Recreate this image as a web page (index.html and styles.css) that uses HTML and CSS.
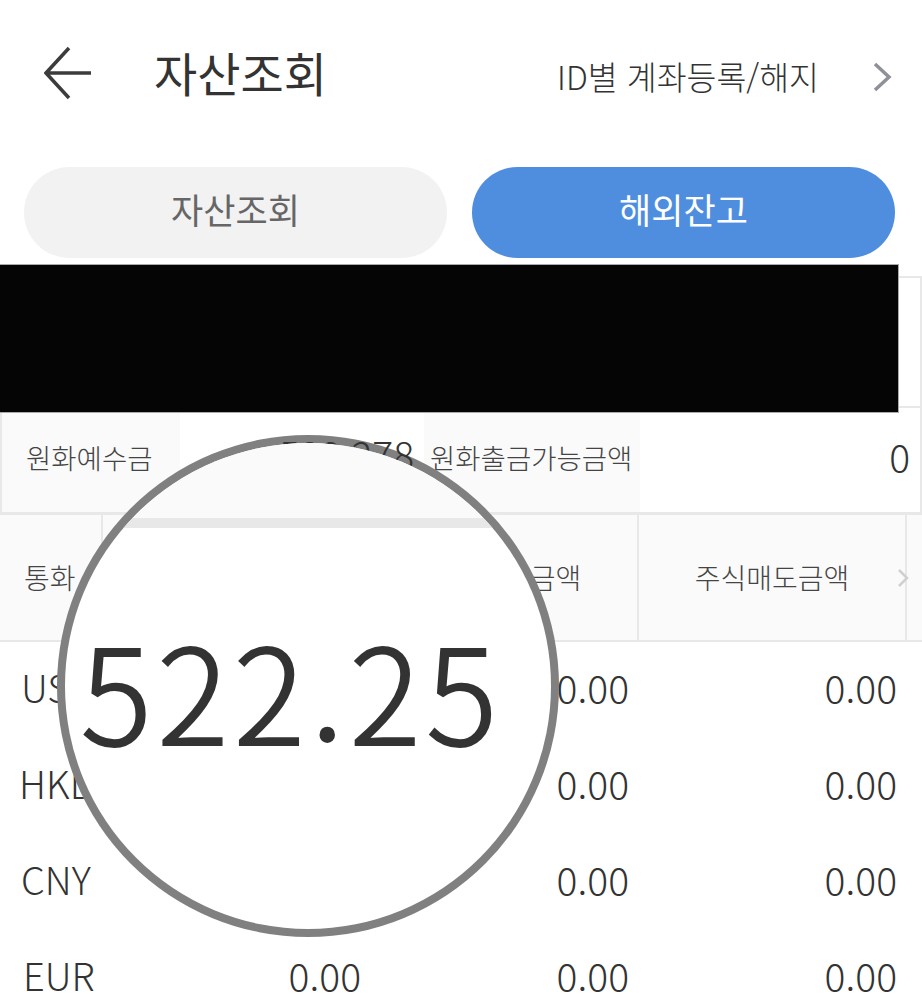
FILE: index.html
```html
<!DOCTYPE html>
<html lang="ko">
<head>
    <meta charset="UTF-8">
    <meta name="viewport" content="width=device-width, initial-scale=1.0">
    <title>자산조회</title>
    <link rel="stylesheet" href="styles.css">
</head>
<body>
    <div class="page">
        <header class="top-bar">
            <svg class="back-icon" width="50" height="56" viewBox="0 0 50 56">
                <path d="M25 3 L2 28 L25 53 M2 28 H47" fill="none" stroke="#3c3c3c" stroke-width="3.5"/>
            </svg>
            <h1 class="page-title">자산조회</h1>
            <span class="account-link">ID별 계좌등록/해지</span>
            <svg class="chevron-icon" width="20" height="32" viewBox="0 0 20 32">
                <path d="M3 3 L17 16 L3 29" fill="none" stroke="#8f9198" stroke-width="3.5"/>
            </svg>
        </header>

        <div class="tabs">
            <button class="tab">자산조회</button>
            <button class="tab tab-active">해외잔고</button>
        </div>

        <section class="summary">
            <div class="hidden-row"></div>
            <div class="summary-row">
                <div class="label-cell summary-label-a">원화예수금</div>
                <div class="value-cell summary-value-a">522,278</div>
                <div class="label-cell summary-label-b">원화출금가능금액</div>
                <div class="value-cell summary-value-b">0</div>
            </div>
            <div class="redaction"></div>
        </section>

        <section class="balance-table">
            <div class="table-row table-head">
                <div class="head-cell head-currency">통화</div>
                <div class="head-cell">외화예수금</div>
                <div class="head-cell">주식매수금액</div>
                <div class="head-cell">주식매도금액</div>
                <div class="head-more">
                    <svg width="12" height="20" viewBox="0 0 12 20">
                        <path d="M2 2 L10 10 L2 18" fill="none" stroke="#d0d0d0" stroke-width="2.5"/>
                    </svg>
                </div>
            </div>
            <div class="table-row">
                <div class="currency-cell">USD</div>
                <div class="amount-cell">522.25</div>
                <div class="amount-cell">0.00</div>
                <div class="amount-cell">0.00</div>
            </div>
            <div class="table-row">
                <div class="currency-cell currency-hkd">HKD</div>
                <div class="amount-cell">0.00</div>
                <div class="amount-cell">0.00</div>
                <div class="amount-cell">0.00</div>
            </div>
            <div class="table-row">
                <div class="currency-cell">CNY</div>
                <div class="amount-cell">0.00</div>
                <div class="amount-cell">0.00</div>
                <div class="amount-cell">0.00</div>
            </div>
            <div class="table-row">
                <div class="currency-cell currency-eur">EUR</div>
                <div class="amount-cell">0.00</div>
                <div class="amount-cell">0.00</div>
                <div class="amount-cell">0.00</div>
            </div>
        </section>

        <!-- magnifier over the table: ring sits under the summary value, lens above it -->
        <div class="magnifier-ring"></div>
        <div class="magnifier">
            <div class="magnifier-head"></div>
            <div class="magnifier-band"></div>
            <div class="magnifier-text">522.25</div>
        </div>
    </div>
</body>
</html>
```
FILE: styles.css
```css
* {
    box-sizing: border-box;
}

html, body {
    margin: 0;
    height: 100%;
    overflow: hidden;
    background: #fff;
}

.page {
    position: relative;
    width: 922px;
    height: 994px;
    overflow: hidden;
    color: #333;
    font-family: "Noto Sans CJK KR", "Noto Sans", sans-serif;
    font-weight: 300;
}

/* Top bar */
.top-bar {
    display: flex;
    align-items: center;
    height: 150px;
    padding: 0 30px 4px 44px;
}

.back-icon {
    flex: none;
    margin-right: 60px;
}

.page-title {
    margin: -4px 0 0;
    font-size: 47px;
    font-weight: 400;
}

.account-link {
    margin-left: auto;
    margin-right: 53px;
    padding-top: 4px;
    font-size: 32.5px;
    font-weight: 300;
}

.chevron-icon {
    flex: none;
    margin-top: 8px;
}

/* Tabs */
.tabs {
    display: flex;
    gap: 25px;
    padding: 17px 27px 0 24px;
}

.tab {
    flex: 1;
    height: 91px;
    padding-bottom: 9px;
    border: none;
    border-radius: 46px;
    background-color: #f2f2f2;
    color: #666;
    font-family: inherit;
    font-size: 35px;
}

.tab-active {
    background-color: #4f8edf;
    color: #fff;
}

/* Summary */
.summary {
    position: relative;
    margin-top: 18px;
    border-top: 2px solid #e8e8e8;
}

.hidden-row {
    height: 130px;
    border-right: 2px solid #e8e8e8;
    border-bottom: 2px solid #e8e8e8;
}

.summary-row {
    display: grid;
    grid-template-columns: 178px 244px 216px 1fr;
    height: 107px;
    border-left: 2px solid #e8e8e8;
    border-right: 2px solid #e8e8e8;
    border-bottom: 3px solid #e8e8e8;
}

.label-cell {
    display: flex;
    align-items: center;
    padding-bottom: 7px;
    background-color: #fafafa;
    color: #444;
    font-size: 27.5px;
    white-space: nowrap;
}

.summary-label-a {
    padding-left: 24px;
}

.summary-label-b {
    padding-left: 6px;
}

.value-cell {
    display: flex;
    align-items: center;
    justify-content: flex-end;
    padding-bottom: 9px;
    font-size: 39px;
}

.summary-value-a {
    position: relative;
    z-index: 2;
    padding-right: 10px;
    padding-bottom: 14px;
}

.summary-value-b {
    padding-right: 10px;
}

.redaction {
    position: absolute;
    left: 0;
    top: -14px;
    width: 899px;
    height: 149px;
    border: 1px solid #aaa;
    border-left: none;
    background-color: #050505;
}

/* Balance table */
.table-row {
    display: grid;
    grid-template-columns: 103px 268px 268px 268px 15px;
    height: 96px;
    align-items: center;
}

.table-head {
    align-items: stretch;
    height: 127px;
    border-bottom: 2px solid #e8e8e8;
    background-color: #fafafa;
}

.head-cell {
    display: flex;
    align-items: center;
    justify-content: center;
    padding-bottom: 2px;
    border-right: 2px solid #e8e8e8;
    color: #444;
    font-size: 28px;
}

.head-currency {
    justify-content: flex-start;
    padding-left: 24px;
}

.head-more {
    display: flex;
    align-items: center;
    margin-left: -10px;
}

.currency-cell {
    padding-left: 21px;
    padding-bottom: 7px;
    font-size: 38px;
}

.currency-hkd {
    padding-left: 19px;
}

.currency-eur {
    padding-left: 23px;
}

.amount-cell {
    padding-right: 10px;
    padding-bottom: 7px;
    text-align: right;
    font-size: 39px;
}

/* Magnifier */
.magnifier-ring {
    position: absolute;
    left: 57px;
    top: 435px;
    width: 502px;
    height: 502px;
    border-radius: 50%;
    background-color: #808080;
}

.magnifier {
    position: absolute;
    z-index: 3;
    left: 65px;
    top: 443px;
    width: 486px;
    height: 486px;
    overflow: hidden;
    border-radius: 50%;
    background-color: #fff;
}

.magnifier-head {
    height: 75px;
    background-color: #fafafa;
}

.magnifier-band {
    height: 10px;
    background-color: #e8e8e8;
}

.magnifier-text {
    padding: 87px 32px 0 0;
    text-align: center;
    font-size: 132px;
    letter-spacing: 6px;
    line-height: 1.1;
    color: #333;
    white-space: nowrap;
    -webkit-text-stroke: 2px #333;
}
```
